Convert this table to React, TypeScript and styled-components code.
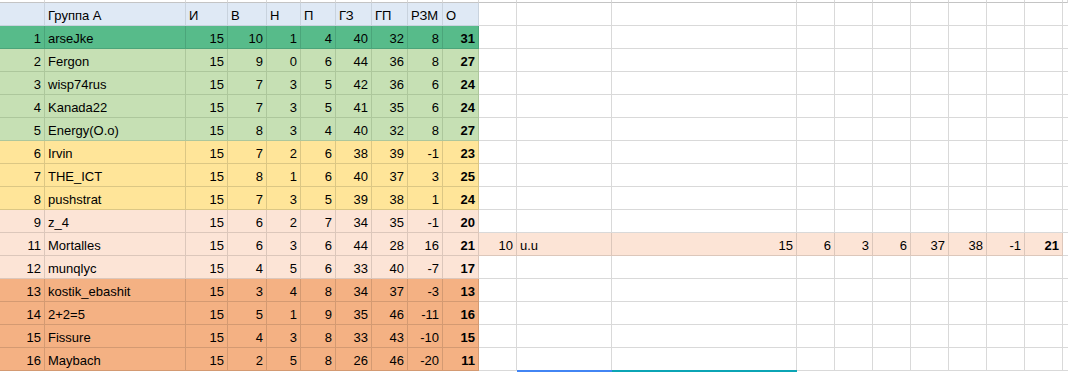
import styled, { createGlobalStyle } from "styled-components";

const GlobalStyle = createGlobalStyle`
  body {
    margin: 0;
    background: #ffffff;
    overflow: hidden;
  }
`;

const COLUMNS = "45px 141px 42px 39px 34px 35px 36px 36px 35px 36px 38px 95px 185px 38px 38px 38px 38px 38px 38px 38px 1fr";

type Tone = "head" | "lead" | "green" | "yellow" | "peach" | "orange" | "blank";

const tones: Record<Tone, { bg: string; line: string }> = {
  head: { bg: "#dfe9f5", line: "#c9d3de" },
  lead: { bg: "#57bb8a", line: "#4ba57a" },
  green: { bg: "#c6e0b4", line: "#adc79c" },
  yellow: { bg: "#ffe599", line: "#dcc784" },
  peach: { bg: "#fce4d6", line: "#dcc7bb" },
  orange: { bg: "#f4b183", line: "#d49a72" },
  blank: { bg: "#ffffff", line: "#d9d9d9" },
};

const Sheet = styled.div`
  width: 1068px;
  display: flex;
  flex-flow: column nowrap;
  font-family: "Liberation Sans", Arial, sans-serif;
  font-size: 13px;
  color: #000000;
`;

const Row = styled.div<{ $height?: number }>`
  display: grid;
  grid-template-columns: ${COLUMNS};
  height: ${(p) => p.$height ?? 23}px;
`;

const Cell = styled.div<{ $tone: Tone; $align?: "left" | "right"; $bold?: boolean }>`
  box-sizing: border-box;
  background: ${(p) => tones[p.$tone].bg};
  border-right: 1px solid ${(p) => tones[p.$tone].line};
  border-bottom: 1px solid ${(p) => tones[p.$tone].line};
  display: flex;
  align-items: flex-end;
  justify-content: ${(p) => (p.$align === "right" ? "flex-end" : "flex-start")};
  padding: 0 3px 1px 3px;
  font-weight: ${(p) => (p.$bold ? 700 : 400)};
  white-space: nowrap;
  overflow: hidden;
  line-height: 16px;
`;

const StubCell = styled.div`
  box-sizing: border-box;
  border-right: 1px solid #d9d9d9;
  border-bottom: 1px solid #c4c4c4;
`;

const AccentBar = styled.div<{ $color?: string }>`
  height: 2px;
  margin-top: -1px;
  background: ${(p) => p.$color ?? "transparent"};
`;

interface Player {
  n: number;
  name: string;
  stats: number[];
  tone: Tone;
}

const players: Player[] = [
  { n: 1, name: "arseJke", stats: [15, 10, 1, 4, 40, 32, 8, 31], tone: "lead" },
  { n: 2, name: "Fergon", stats: [15, 9, 0, 6, 44, 36, 8, 27], tone: "green" },
  { n: 3, name: "wisp74rus", stats: [15, 7, 3, 5, 42, 36, 6, 24], tone: "green" },
  { n: 4, name: "Kanada22", stats: [15, 7, 3, 5, 41, 35, 6, 24], tone: "green" },
  { n: 5, name: "Energy(O.o)", stats: [15, 8, 3, 4, 40, 32, 8, 27], tone: "green" },
  { n: 6, name: "Irvin", stats: [15, 7, 2, 6, 38, 39, -1, 23], tone: "yellow" },
  { n: 7, name: "THE_ICT", stats: [15, 8, 1, 6, 40, 37, 3, 25], tone: "yellow" },
  { n: 8, name: "pushstrat", stats: [15, 7, 3, 5, 39, 38, 1, 24], tone: "yellow" },
  { n: 9, name: "z_4", stats: [15, 6, 2, 7, 34, 35, -1, 20], tone: "peach" },
  { n: 11, name: "Mortalles", stats: [15, 6, 3, 6, 44, 28, 16, 21], tone: "peach" },
  { n: 12, name: "munqlyc", stats: [15, 4, 5, 6, 33, 40, -7, 17], tone: "peach" },
  { n: 13, name: "kostik_ebashit", stats: [15, 3, 4, 8, 34, 37, -3, 13], tone: "orange" },
  { n: 14, name: "2+2=5", stats: [15, 5, 1, 9, 35, 46, -11, 16], tone: "orange" },
  { n: 15, name: "Fissure", stats: [15, 4, 3, 8, 33, 43, -10, 15], tone: "orange" },
  { n: 16, name: "Maybach", stats: [15, 2, 5, 8, 26, 46, -20, 11], tone: "orange" },
];

// the moved row, sitting to the right of Mortalles
const extra = { n: 10, name: "u.u", stats: [15, 6, 3, 6, 37, 38, -1, 21] };

const headers = ["И", "В", "Н", "П", "ГЗ", "ГП", "РЗМ", "О"];
const TOTAL = 21;
const TAIL = TOTAL - 10;

const StatCells = ({ stats, tone }: { stats: number[]; tone: Tone }) => (
  <>
    {stats.map((v, i) => (
      <Cell key={i} $tone={tone} $align="right" $bold={i === stats.length - 1}>
        {v}
      </Cell>
    ))}
  </>
);

const Blanks = ({ count }: { count: number }) => (
  <>
    {Array.from({ length: count }).map((_, i) => (
      <Cell key={i} $tone="blank" />
    ))}
  </>
);

const App = () => {
  return (
    <>
      <GlobalStyle />
      <Sheet>
        <Row $height={3}>
          {Array.from({ length: TOTAL }).map((_, i) => (
            <StubCell key={i} />
          ))}
        </Row>
        <Row>
          <Cell $tone="head" />
          <Cell $tone="head">Группа А</Cell>
          {headers.map((h) => (
            <Cell key={h} $tone="head">
              {h}
            </Cell>
          ))}
          <Blanks count={TAIL} />
        </Row>
        {players.map((p) => (
          <Row key={p.n}>
            <Cell $tone={p.tone} $align="right">
              {p.n}
            </Cell>
            <Cell $tone={p.tone}>{p.name}</Cell>
            <StatCells stats={p.stats} tone={p.tone} />
            {p.n === 11 ? (
              <>
                <Cell $tone="peach" $align="right">
                  {extra.n}
                </Cell>
                <Cell $tone="peach">{extra.name}</Cell>
                <StatCells stats={extra.stats} tone="peach" />
                <Cell $tone="blank" />
              </>
            ) : (
              <Blanks count={TAIL} />
            )}
          </Row>
        ))}
        <Row $height={2}>
          {Array.from({ length: TOTAL }).map((_, i) => (
            <AccentBar
              key={i}
              $color={i === 11 ? "#4285f4" : i === 12 ? "#0ba5b5" : undefined}
            />
          ))}
        </Row>
      </Sheet>
    </>
  );
};

export default App;
